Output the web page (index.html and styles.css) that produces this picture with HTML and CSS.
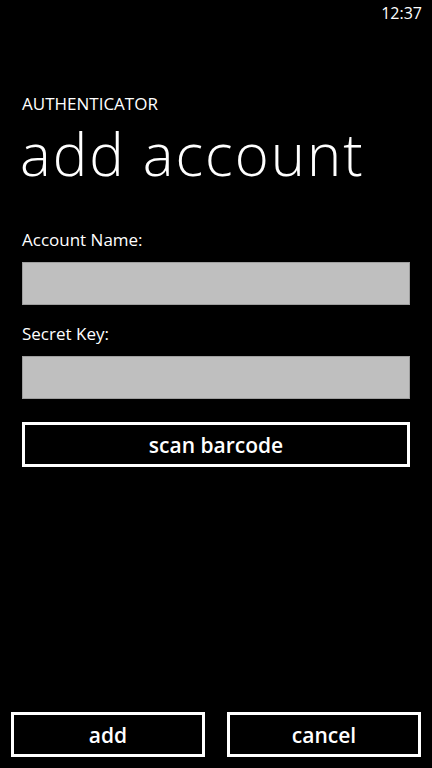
FILE: index.html
```html
<!DOCTYPE html>
<html>
<head>
<meta charset="utf-8">
<link rel="stylesheet" href="styles.css">
</head>
<body>
<div class="screen">
  <div class="status"><span class="time">12:37</span></div>
  <div class="header">
    <div class="app-name">AUTHENTICATOR</div>
    <div class="page-title">add account</div>
  </div>
  <div class="form">
    <div class="label">Account Name:</div>
    <div class="input"></div>
    <div class="label">Secret Key:</div>
    <div class="input"></div>
    <div class="button scan">scan barcode</div>
  </div>
  <div class="spacer"></div>
  <div class="appbar">
    <div class="button">add</div>
    <div class="button">cancel</div>
  </div>
</div>
</body>
</html>
```
FILE: styles.css
```css
html, body {
  margin: 0;
  padding: 0;
  background: #000;
}
.screen {
  width: 432px;
  height: 768px;
  display: flex;
  flex-direction: column;
  color: #fff;
  font-family: "Open Sans", "Noto Sans", sans-serif;
  box-sizing: border-box;
}
.status {
  height: 26px;
  display: flex;
  justify-content: flex-end;
  align-items: center;
  padding-right: 10px;
}
.time {
  font-size: 16px;
  line-height: 22px;
  font-weight: 400;
}
.header {
  padding: 0 22px;
  margin-top: 67px;
}
.app-name {
  font-size: 17px;
  line-height: 22px;
  font-weight: 400;
}
.page-title {
  font-size: 58px;
  font-weight: 300;
  line-height: 78px;
  letter-spacing: 2px;
  margin-left: -2px;
}
.form {
  padding: 0 22px;
  margin-top: 36px;
  display: flex;
  flex-direction: column;
}
.label {
  font-size: 17px;
  line-height: 22px;
  margin-bottom: 11px;
}
.input {
  background: #bfbfbf;
  border: 1px solid #9e9e9e;
  box-sizing: border-box;
  height: 43px;
  margin-bottom: 18px;
}
.button {
  border: 3px solid #fff;
  box-sizing: border-box;
  height: 45px;
  display: flex;
  align-items: center;
  justify-content: center;
  font-size: 21px;
  font-weight: 600;
}
.scan {
  margin-top: 5px;
}
.spacer {
  flex: 1;
}
.appbar {
  display: flex;
  gap: 22px;
  padding: 0 11px 11px 11px;
}
.appbar .button {
  flex: 1;
}
```
